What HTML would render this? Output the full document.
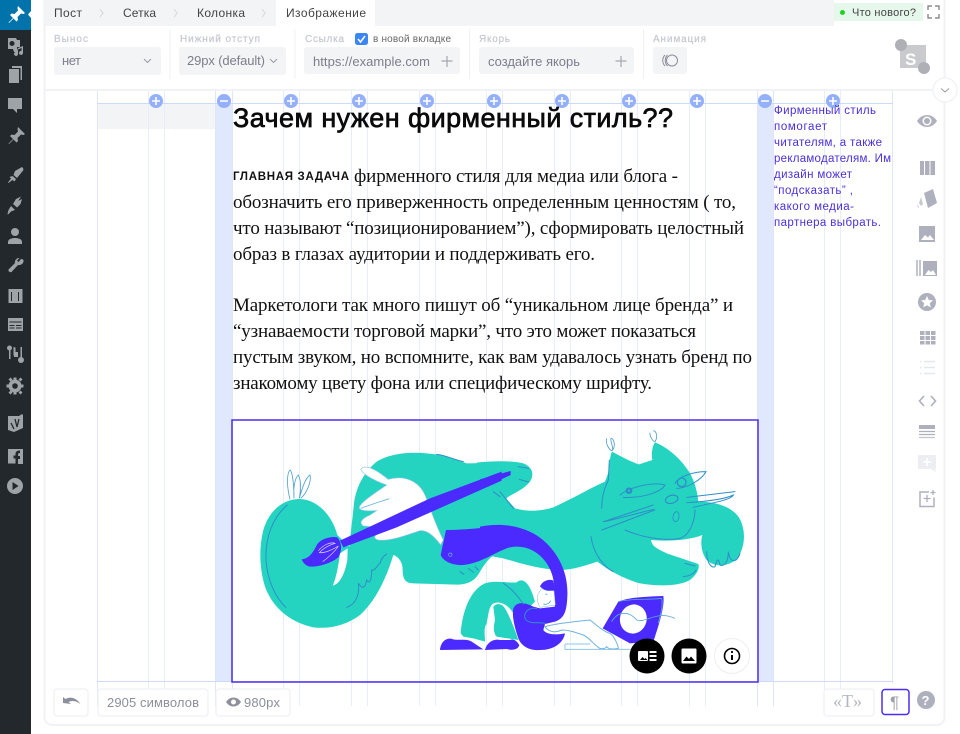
<!DOCTYPE html>
<html><head><meta charset="utf-8"><style>
html,body{margin:0;padding:0;background:#fff;width:960px;height:734px;overflow:hidden}
svg{display:block;position:absolute;left:0;top:0;filter:blur(.3px)}
text{font-family:"Liberation Sans","Noto Sans CJK SC",sans-serif}
.s{font-family:"Liberation Serif","Noto Serif CJK SC",serif;font-size:19px;fill:#111}
.l{font-size:10px;fill:#c6c8d0;stroke:#c6c8d0;stroke-width:.2}
.t{font-size:12px;fill:#444}
.v{font-size:13px;fill:#7b7e8c}
.p{font-size:11.5px;fill:#4a2fd8}
.g{stroke:#e6edfc;stroke-width:1}
.c{fill:#9ea3a8}
.r{fill:#aeb1bd}
.d{fill:none;stroke:#2f8ec9;stroke-width:3;stroke-linecap:round}
</style></head><body>
<svg width="960" height="734" viewBox="0 0 960 734" xmlns="http://www.w3.org/2000/svg">
<!-- panel -->
<rect x="44.5" y="-8" width="900" height="733" rx="8" fill="#fff" stroke="#f1f2f6" stroke-width="2"/>
<rect x="45" y="0" width="789" height="26" fill="#f3f4f6"/>
<rect x="276" y="0" width="99" height="26" fill="#fff"/>
<rect x="45" y="89" width="899" height="2" fill="#f1f2f6"/>
<text class="t" x="54" y="17" textLength="28">Пост</text>
<text class="t" x="123" y="17" textLength="33">Сетка</text>
<text class="t" x="197" y="17" textLength="48">Колонка</text>
<text class="t" x="286" y="17" textLength="80">Изображение</text>
<path d="M100 9l3 4-3 4M174 9l3 4-3 4M262 9l3 4-3 4" fill="none" stroke="#d3d5da" stroke-width="1"/>
<!-- whats new -->
<rect x="834" y="3" width="89" height="18" fill="#e6f8ec"/>
<circle cx="842.5" cy="12.5" r="2.5" fill="#1fd321"/>
<text x="852" y="16" font-size="11" fill="#444" textLength="64">Что нового?</text>
<path d="M928 10V6h4M935 6h4v4M928 14v4h4M935 18h4v-4" fill="none" stroke="#777" stroke-width="1.200"/>
<!-- toolbar -->
<path d="M170 29v50M295 29v50M469.500 29v50M643.500 29v50" stroke="#eff0f3" stroke-width="1"/>
<text class="l" x="54" y="42" textLength="34">Вынос</text>
<text class="l" x="180" y="42" textLength="80">Нижний отступ</text>
<text class="l" x="305" y="42" textLength="39">Ссылка</text>
<text class="l" x="479" y="42" textLength="31">Якорь</text>
<text class="l" x="653" y="42" textLength="53">Анимация</text>
<rect x="54" y="47" width="107" height="28" rx="3" fill="#f3f4f6"/>
<rect x="179" y="47" width="107" height="28" rx="3" fill="#f3f4f6"/>
<rect x="304" y="47" width="156" height="27" rx="3" fill="#f3f4f6"/>
<rect x="479" y="47" width="155" height="27" rx="3" fill="#f3f4f6"/>
<rect x="653" y="47" width="34" height="27" rx="3" fill="#f3f4f6"/>
<text class="v" x="62" y="65" textLength="19">нет</text>
<path d="M144 59l3.500 3.500 3.500-3.500" fill="none" stroke="#9a9ca6" stroke-width="1"/>
<text class="v" x="187" y="65" textLength="78">29px (default)</text>
<path d="M270 59l3.500 3.500 3.500-3.500" fill="none" stroke="#9a9ca6" stroke-width="1"/>
<text class="v" x="313" y="66" textLength="117">https://example.com</text>
<path d="M447 56v11M441.500 61h11M621 56v11M615.500 61h11" stroke="#a5a7af" stroke-width="1.200"/>
<text class="v" x="488" y="66" textLength="92">создайте якорь</text>
<rect x="355" y="33" width="13" height="12" rx="2.500" fill="#3b86f5"/>
<path d="M358 39l2.500 3 4.500-6" fill="none" stroke="#fff" stroke-width="1.500"/>
<text x="373" y="42" font-size="10" fill="#666" textLength="78">в новой вкладке</text>
<circle cx="672" cy="60.500" r="5.500" fill="none" stroke="#8c8e98" stroke-width="1"/>
<path d="M665 55c-3 3-3 8 0 11M667.500 55c-3 3-3 8 0 11" fill="none" stroke="#8c8e98" stroke-width="1"/>
<rect x="900" y="45" width="26" height="23" fill="#c9cace"/>
<text x="905" y="65" font-size="17" font-weight="bold" fill="#fff">S</text>
<circle cx="901" cy="45" r="6" fill="#aeb0b6"/><circle cx="924" cy="68" r="6" fill="#aeb0b6"/>
<circle cx="945" cy="90" r="12" fill="#fff" stroke="#eceef1"/>
<path d="M941 88.500l4 3.500 4-3.500" fill="none" stroke="#999" stroke-width="1"/>

<!-- grid -->
<rect x="98" y="104" width="117" height="25" fill="#f3f4f6"/>
<rect x="216" y="104" width="16" height="578" fill="#dfe8fd"/>
<rect x="758" y="104" width="15" height="578" fill="#dfe8fd"/>
<path class="g" d="M148.500 91v615M164.500 91v615M283.500 91v615M299.500 91v615M351.500 91v615M367.500 91v615M419.500 91v615M435.500 91v615M486.500 91v615M502.500 91v615M554.500 91v615M570.500 91v615M621.500 91v615M637.500 91v615M689.500 91v615M705.500 91v615M824.500 91v615M840.500 91v615"/>
<path d="M97.500 91v615M215.500 91v615M232.500 91v615M757.500 91v615M773.500 91v615M892.500 91v592" stroke="#dde6fb" stroke-width="1"/>
<path d="M97 103.500h796M97 681.500h796" stroke="#cddafb" stroke-width="1"/>
<g fill="#94b0fb">
<circle cx="156" cy="101" r="7"/><circle cx="224" cy="101" r="7"/><circle cx="291" cy="101" r="7"/><circle cx="359" cy="101" r="7"/><circle cx="427" cy="101" r="7"/><circle cx="494" cy="101" r="7"/><circle cx="562" cy="101" r="7"/><circle cx="629" cy="101" r="7"/><circle cx="697" cy="101" r="7"/><circle cx="765" cy="101" r="7"/><circle cx="833" cy="101" r="7"/>
</g>
<path stroke="#fff" stroke-width="1.600" d="M152 101h8M156 97v8M220 101h8M287 101h8M291 97v8M355 101h8M359 97v8M423 101h8M427 97v8M490 101h8M494 97v8M558 101h8M562 97v8M625 101h8M629 97v8M693 101h8M697 97v8M761 101h8M829 101h8M833 97v8"/>

<!-- text -->
<text x="233" y="127" font-size="27" fill="#0b0b0b" stroke="#0b0b0b" stroke-width=".7" textLength="440">Зачем нужен фирменный стиль??</text>
<text x="233" y="180" font-size="11.500" font-weight="bold" fill="#111" textLength="116">ГЛАВНАЯ ЗАДАЧА</text>
<text class="s" x="354" y="182" textLength="324">фирменного стиля для медиа или блога -</text>
<text class="s" x="233" y="208" textLength="503">обозначить его приверженность определенным ценностям ( то,</text>
<text class="s" x="233" y="234" textLength="511">что называют “позиционированием”), сформировать целостный</text>
<text class="s" x="233" y="260" textLength="362">образ в глазах аудитории и поддерживать его.</text>
<text class="s" x="233" y="311" textLength="500">Маркетологи так много пишут об “уникальном лице бренда” и</text>
<text class="s" x="233" y="337" textLength="463">“узнаваемости торговой марки”, что это может показаться</text>
<text class="s" x="233" y="363" textLength="519">пустым звуком, но вспомните, как вам удавалось узнать бренд по</text>
<text class="s" x="233" y="389" textLength="419">знакомому цвету фона или специфическому шрифту.</text>
<text class="p" x="774" y="114" textLength="102">Фирменный стиль</text>
<text class="p" x="774" y="130" textLength="53">помогает</text>
<text class="p" x="774" y="146" textLength="108">читателям, а также</text>
<text class="p" x="774" y="162" textLength="117">рекламодателям. Им</text>
<text class="p" x="774" y="178" textLength="78">дизайн может</text>
<text class="p" x="774" y="194" textLength="79">“подсказать” ,</text>
<text class="p" x="774" y="210" textLength="80">какого медиа-</text>
<text class="p" x="774" y="226" textLength="107">партнера выбрать.</text>

<!-- image frame -->
<rect x="232" y="420" width="526" height="262" fill="none" stroke="#4a2ff0" stroke-width="1.500"/>

<!-- illustration: cat body first -->
<g transform="translate(490 420) scale(.33333)">
<path fill="#24d4c0" d="M-40 128C10 122 70 122 100 130C125 140 135 160 120 185C100 210 70 220 48 235L75 265C110 275 150 275 190 262C250 235 300 205 345 185L358 150C358 125 362 100 366 95C385 105 420 125 447 133L487 120C483 100 488 75 495 67C530 80 570 115 590 145C610 170 622 210 625 245C665 245 720 255 745 290C765 320 770 370 745 410C725 440 675 445 650 420C635 400 630 370 637 345C600 360 540 365 483 360C487 380 500 385 530 400L625 432C630 445 620 465 600 480C570 498 510 500 450 490C410 480 360 455 322 425C290 435 250 450 210 450C150 448 90 430 40 415L0 408L-40 380Z"/>
</g>
<!-- illustration left -->
<g transform="translate(230 420) scale(.33333)">
<path fill="#24d4c0" d="M205 237C255 235 305 280 322 345L358 380C362 340 368 290 372 250C380 190 410 150 440 125C480 100 540 95 590 100C640 103 680 120 710 130L830 128L830 380L800 400C780 410 765 430 750 455C735 485 710 494 680 494L550 490C525 490 518 475 518 450C518 425 505 410 490 405C470 470 440 540 390 585C350 615 300 628 250 622C190 610 130 570 105 500C90 450 85 390 100 330C115 280 150 240 205 237Z"/>
<path fill="#fff" d="M353 385L330 400C325 440 318 475 308 497C330 492 345 460 352 420Z"/>
<path class="d" stroke-width="2" d="M172 255C130 290 105 350 108 420C112 480 135 530 167 562M350 562C375 555 390 525 385 490C395 505 405 510 410 480C415 490 425 490 425 450C435 455 445 430 450 430C455 410 465 405 470 402M700 125C670 118 645 105 620 103M690 455l12 8M715 445l15 12M735 440l10 10M790 215l20 15"/>
<path class="d" d="M745 580C735 600 725 620 718 640M735 585C728 605 722 620 718 635"/>
<path d="M180 238C170 200 170 160 180 150C188 155 192 200 192 235M192 235C190 200 195 175 205 165C215 185 212 215 208 235M208 235C215 210 225 175 240 165C245 185 230 220 212 235" fill="none" stroke="#4f9fd0" stroke-width="2.500"/>
<path fill="#fff" stroke="#8fc5e8" stroke-width="2" d="M392 148C405 130 440 150 475 178C520 165 565 180 585 225C600 260 610 300 640 360L632 375C610 345 590 330 570 332C530 345 480 365 445 360C430 358 430 345 450 338L470 330C440 320 420 320 400 318C388 310 390 298 420 285L440 272C420 272 395 275 388 265C385 255 410 235 470 195C440 185 400 165 392 148Z"/>
<path d="M392 265C420 255 450 245 478 236" fill="none" stroke="#6fb3e0" stroke-width="2.500"/>
<path fill="#4b2aff" d="M330 362L600 235L815 155L815 182L500 322L340 382Z"/>
<path fill="#4b2aff" d="M215 418C240 415 250 395 262 372C275 355 305 348 322 352C338 370 335 395 325 412C300 432 265 440 240 440C228 437 220 430 215 418Z"/>
<path fill="none" stroke="#dfe3ff" stroke-width="2" d="M265 392C280 375 300 365 315 370C290 378 275 390 268 398C285 400 310 388 325 378C315 395 295 412 278 425"/>
<path fill="#4b2aff" d="M648 330C690 330 750 325 810 318L830 318L830 385C790 400 750 430 700 435C670 437 640 425 632 405Z"/>
<circle cx="661" cy="404" r="5" fill="none" stroke="#68b4e4" stroke-width="2"/>
<!-- legs -->
<path fill="#24d4c0" d="M692 640C697 575 720 510 765 490C800 480 830 490 860 487C880 470 900 490 915 545L860 600C845 560 815 540 790 550C775 560 775 590 770 610C760 625 765 645 765 665L730 655L700 650Z"/>
<path fill="#24d4c0" d="M790 560C800 548 815 550 825 565C840 590 855 630 865 660L800 650C790 640 790 620 795 600Z"/>
<path fill="#4b2aff" d="M630 690C632 665 650 650 670 658C690 662 710 655 725 665L760 688Z"/>
<path fill="#4b2aff" d="M765 690C770 668 790 655 810 660L840 660C850 655 860 662 868 675C865 688 850 692 830 687Z"/>
</g>

<!-- illustration right -->
<g transform="translate(490 420) scale(.33333)">
<path fill="#4b2aff" d="M-30 178L62 153L62 165L-30 208Z"/>
<path class="d" stroke-width="2" d="M85 140l30 5M88 178l28 8M30 215L70 265"/>
<path fill="#4b2aff" d="M-30 320C40 305 120 320 170 370C215 415 235 470 232 530C230 570 225 595 195 605L165 612L160 630C170 645 200 645 225 640C220 670 190 690 150 690C120 692 95 680 85 655C75 625 65 590 70 565C80 545 100 545 130 560L150 565L195 560L192 490C185 430 140 380 80 380C50 380 20 395 -30 420Z"/>
<!-- face -->
<path fill="#4b2aff" d="M150 500C155 485 175 475 190 482L198 520L170 515Z"/>
<path fill="#fff" stroke="#7bb8e4" stroke-width="1.500" d="M143 525L155 505C170 515 180 512 192 512L196 555L150 562C143 550 140 535 143 525Z"/>
<path d="M160 552C170 555 178 550 182 542M166 522l6 1" fill="none" stroke="#2f8ec9" stroke-width="2"/>
<path class="d" stroke-width="2" d="M140 566C115 560 100 580 105 595C115 615 150 605 165 610"/>
<path class="d" stroke-width="2" d="M40 490C65 505 85 530 100 552"/>
<!-- keyboard and hand -->
<path fill="none" stroke="#8fc5e8" stroke-width="3" d="M225 672H300M385 688H225V672M385 688H420"/>
<path fill="#fff" stroke="#6fb3e0" stroke-width="3" d="M165 620C190 612 250 605 300 600C320 615 340 635 360 640C375 650 385 680 385 685C370 688 355 688 350 680C345 688 330 688 325 682C310 672 300 655 280 645C250 635 235 630 215 630C195 640 175 635 165 620Z"/>
<path fill="#4b2aff" d="M385 545C420 530 480 530 520 528C525 560 505 620 490 665L420 670L338 625Z"/>
<ellipse cx="430" cy="597" rx="40" ry="44" fill="#fff" transform="rotate(15 430 597)"/>
<path fill="none" stroke="#5ea9db" stroke-width="2.500" d="M365 605C385 570 420 575 440 600C470 610 500 570 555 595M385 545C420 535 480 540 515 535C520 560 510 590 505 610"/>
<!-- cat lines -->
<path d="M350 55C345 70 358 90 366 92C378 80 372 58 365 55C358 55 368 75 368 88M480 38C478 50 490 65 495 65C505 50 498 32 490 32" fill="none" stroke="#4f9fd0" stroke-width="2.500"/>
<path class="d" d="M390 225C420 200 490 185 525 195C515 215 460 235 400 232M555 190C570 165 620 155 648 155C635 180 590 205 560 205M340 305L490 255M335 330C390 310 440 290 495 270M340 305C370 300 440 280 490 268M590 232L735 215M590 248C640 245 700 240 730 225C725 240 660 250 610 262M405 330C450 350 520 365 570 355C600 345 615 300 615 270M358 120L355 180C340 210 335 240 335 265M303 350C310 400 340 440 370 455M650 395C650 430 665 445 675 440C680 420 685 410 690 435C700 440 715 430 715 395C720 430 740 430 750 400M580 470C595 468 610 465 618 450M585 430l30 8"/>
<circle cx="417" cy="212" r="10" fill="#2f8ec9"/><circle cx="417" cy="212" r="3" fill="#24d4c0"/>
<circle cx="575" cy="187" r="13" fill="none" stroke="#2f8ec9" stroke-width="4"/>
<ellipse cx="545" cy="238" rx="19" ry="12" fill="none" stroke="#2f8ec9" stroke-width="3.500" transform="rotate(-15 545 238)"/>
<ellipse cx="558" cy="290" rx="9" ry="15" fill="none" stroke="#2f8ec9" stroke-width="2.500" transform="rotate(10 558 290)"/>
</g>

<!-- image buttons -->
<circle cx="647" cy="656" r="17.500" fill="#000"/>
<rect x="638" y="651" width="10" height="10" rx="1" fill="#fff"/><path d="M640 660l2.500-3 2 2 1-1 2 2z" fill="#000"/>
<path d="M649.500 652h7M649.500 656h7M649.500 660h7" stroke="#fff" stroke-width="2"/>
<circle cx="689" cy="656" r="17.500" fill="#000"/>
<rect x="681.500" y="648.500" width="15" height="15" rx="1" fill="#fff"/><path d="M683 661l3.500-4.500 2.500 2.500 2-2.500 4 4.500z" fill="#000"/>
<circle cx="732" cy="656" r="17.500" fill="#fff" stroke="#eceef1"/>
<circle cx="732" cy="656" r="7.500" fill="none" stroke="#000" stroke-width="1.600"/>
<path d="M732 655v5" stroke="#000" stroke-width="2"/><circle cx="732" cy="652" r="1.100" fill="#000"/>

<!-- bottom bar -->
<g fill="#fff" stroke="#eff0f4" stroke-width="1.200">
<rect x="54" y="689" width="34" height="27" rx="3"/>
<rect x="98" y="689" width="110" height="27" rx="3"/>
<rect x="216" y="689" width="74" height="27" rx="3"/>
<rect x="824" y="689" width="50" height="27" rx="3"/>
</g>
<path d="M63 703l0-6 2.500 2c5-3 11-1 15 5-4-3-8-4-12-2l2.500 2z" fill="#8c8f9c"/>
<text x="107" y="707" font-size="13" fill="#8c8f9c" textLength="92">2905 символов</text>
<path d="M226 702c4-6 11-6 15 0-4 6-11 6-15 0z" fill="#8c8f9c"/><circle cx="233.500" cy="702" r="2.500" fill="#fff"/>
<text x="244" y="707" font-size="13" fill="#8c8f9c" textLength="36">980px</text>
<text x="833" y="707" style="font-family:'Liberation Serif',serif;font-size:18px" fill="#b5b7c0">«T»</text>
<rect x="882" y="689.500" width="27" height="25" rx="3" fill="#fff" stroke="#4a2ff0" stroke-width="1.500"/>
<text x="890" y="708" font-size="17" fill="#9ea0ab">¶</text>
<circle cx="926" cy="700" r="9" fill="#aeb1bd"/>
<text x="921.500" y="705" font-size="13" font-weight="bold" fill="#fff">?</text>

<!-- right icons -->
<path class="r" d="M917 121c5-8 15-8 20 0-5 8-15 8-20 0z"/><circle cx="927" cy="121" r="4.500" fill="#fff"/><circle cx="927" cy="121" r="3" class="r"/>
<path class="r" d="M920 161h4v14h-4zM925 161h4.500v14H925zM930.500 161h4.500v14h-4.500z"/>
<path class="r" d="M924 193l9-4 4 14-9 5z"/><path d="M921 197l2 7-2 2-2-3zM917 204l2 3-1 1z" fill="#c6c8d1"/>
<path class="r" d="M919 226h16v16h-16z"/><path d="M921 240l4-5 3 2.500 2-2.500 4 5z" fill="#fff"/>
<path d="M917 260v16M920 260v16" stroke="#aeb1bd" stroke-width="1.500"/><path class="r" d="M923 261h14v15h-14z"/><path d="M925 275l3.500-5 2.500 2 2-2 3 5z" fill="#fff"/>
<circle class="r" cx="927" cy="302" r="9"/><path d="M927 296l1.800 4 4.200.4-3.200 2.800 1 4.300-3.800-2.300-3.800 2.300 1-4.300-3.200-2.800 4.200-.4z" fill="#fff"/>
<path class="r" d="M920 331h4.500v4H920zM925.500 331h4.500v4h-4.500zM931 331h4.500v4H931zM920 336h4.500v4H920zM925.500 336h4.500v4h-4.500zM931 336h4.500v4H931zM920 341h4.500v3.500H920zM925.500 341h4.500v3.500h-4.500zM931 341h4.500v3.500H931z"/>
<path d="M924 361.500h11M924 367.500h11M924 373.500h11M920 361.500h1.500M920 367.500h1.500M920 373.500h1.500" stroke="#e6e7ec" stroke-width="1.500"/>
<path d="M924 396l-4.500 5 4.500 5M931 396l4.500 5-4.500 5" fill="none" stroke="#aeb1bd" stroke-width="1.600"/>
<path class="r" d="M919 425h16v4h-16z"/><path d="M919 431.500h16M919 434.500h16" stroke="#aeb1bd" stroke-width="1.300"/><path d="M919 437.500h16" stroke="#c3c5cf" stroke-width="1.300"/>
<path d="M918 455h18v14h-1l1 3-5-3h-13z" fill="#eceef1"/><path d="M927 458v8M923 462h8" stroke="#fff" stroke-width="1.600"/>
<path d="M929 492h-9v14.500h14v-9" fill="none" stroke="#aeb1bd" stroke-width="1.500"/>
<path d="M927 495v7M923.500 498.500h7M933 490v5M930.500 492.500h5" stroke="#aeb1bd" stroke-width="1.300"/>

<!-- sidebar -->
<rect x="0" y="0" width="31" height="734" fill="#23282d"/>
<rect x="0" y="0" width="31" height="30" fill="#0073aa"/>
<path d="M31 11l-3 3.500 3 3.500z" fill="#fff"/>
<g class="c">
<path d="M18 6l7 7-1.500 1-2.500-.5-3.500 3.500.5 3-1.500 1.500-3-3-4.500 4.500-.5-.5 4.500-4.500-3-3 1.500-1.500 3 .5 3.500-3.500-.5-2.500z" style="fill:#fff"/>
<path d="M8 38h8l1 2h3v7h-3v5h-3l-1-3H8zM12 41a2.500 2.500 0 100 5 2.500 2.500 0 000-5zM18 48l5-2v7a2 2 0 11-1.500-2v-3l-3.500 1.500v4.500a2 2 0 11-1.500-2z"/>
<path d="M12 66h10v14h-1.500V68H12zM9 69h10v14H9z"/>
<path d="M8 98h14v11h-5v4l-4-4H8z" />
<path d="M18 127l7 7-1.500 1-2.500-.5-3.500 3.500.5 3-1.500 1.500-3-3-4.500 4.500-.5-.5 4.500-4.500-3-3 1.500-1.500 3 .5 3.500-3.500-.5-2.500z"/>
<path d="M15 171l7-4 1 1 .5 2L17 178l-3.500-3zM12.500 176l3.500 3-1.500 2.500-2-1.500-4 3-.5-.5 3-4-1.500-1.500z"/>
<path d="M16 199l5-2.500-2.800 4.500 3.800-2-1.500 5-3.500 3.500-4-3.500zM11 206l4 4-4 1.500-3 3-.5-.5 1-4z" />
<circle cx="15" cy="232" r="4"/><path d="M8 242c0-3 4-4 7-4s7 1 7 4v2H8z"/>
<path d="M21 259c2 0 3.500 1 2 4-1.500 2-4 2.500-5 2l-6 6.500c-1 1.500-4 .5-3.500-2l6.500-6.500c-.5-1.500.5-4 3-5l1.500 0-2.500 2.500 1.500 1.500z"/>
<path d="M8.500 289h14v14h-14z"/>
<path d="M8 318h15v13H8z"/>
<circle cx="9.500" cy="348" r="2.500"/><path d="M9 348h1.500v11H9z"/><circle cx="21" cy="360" r="3"/><path d="M20.500 347h1.500v12h-1.500z"/>
<circle cx="15" cy="386" r="6.500"/>
<path d="M13.500 377.500h3v3h-3zM13.500 391.500h3v3h-3zM6.500 384.500h3v3h-3zM20.500 384.500h3v3h-3zM8.500 379.500l2-2 2 2-2 2zM18.500 379.500l2-2 2 2-2 2zM8.500 392.500l2-2 2 2-2 2zM18.500 392.500l2-2 2 2-2 2z"/>
<path d="M8 416h11l3-2 1 1v13l-9 4-6-2z"/>
<path d="M8 449h15v15h-5v-5h2v-3h-2v-1.500c0-1 .5-1.500 2-1.500v-2.500c-3 0-4.500 1-4.500 3.500v1.500h-2v3h2v5H8z"/>
<circle cx="15" cy="486" r="8"/>
</g>
<circle cx="15" cy="386" r="2.800" fill="#23282d"/>
<path d="M12.500 482l6 4-6 4z" fill="#23282d"/>
<path d="M11.500 292v9M18.500 292v9" stroke="#23282d" stroke-width="1"/>
<path d="M9.500 322h12M9.500 325.500h5M16 325.500h5.500M9.500 328h5M16 328h5.500" stroke="#23282d" stroke-width="1"/>
<path d="M13.500 347l2 .5v8h-2zM14 352h4v5h-4z" fill="#9ea3a8"/>
<path d="M15 419l2 8 2-8M11 423l3 6" stroke="#23282d" stroke-width="1.300" fill="none"/>
</svg>
</body></html>
